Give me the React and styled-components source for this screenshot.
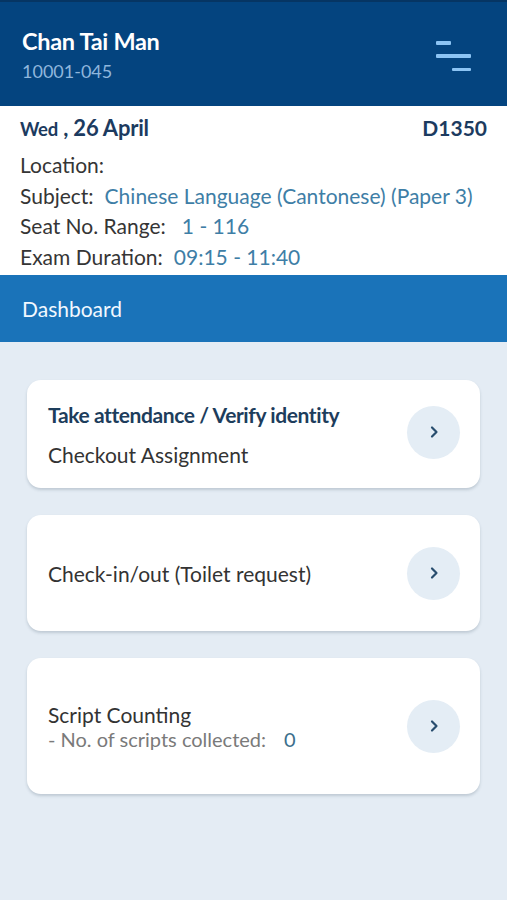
import React from "react";
import styled, { createGlobalStyle } from "styled-components";

const Global = createGlobalStyle`
  html, body { margin: 0; padding: 0; }
  body { font-family: Lato, "Open Sans", sans-serif; background: #e5edf5; }
  * { box-sizing: border-box; }
`;

const Page = styled.div`
  width: 507px;
  min-height: 900px;
  background: #e4ecf4;
  display: flex;
  flex-direction: column;
`;

const Header = styled.header`
  height: 106px;
  background: #04447f;
  border-top: 2px solid #063563;
  display: flex;
  align-items: center;
  justify-content: space-between;
  padding: 0 36px 0 22px;
`;

const UserBlock = styled.div`
  display: flex;
  flex-direction: column;
  gap: 5px;
`;

const UserName = styled.div`
  color: #ffffff;
  font-weight: 700;
  font-size: 23.5px;
  letter-spacing: -0.3px;
`;

const UserId = styled.div`
  color: #8fb6dc;
  font-size: 18px;
`;

const MenuButton = styled.button`
  background: none;
  border: none;
  padding: 0;
  width: 35px;
  height: 30px;
  display: flex;
  flex-direction: column;
  justify-content: space-between;
  align-items: flex-start;
  margin-top: 4px;
`;

const MenuLine = styled.span`
  display: block;
  height: 3.5px;
  border-radius: 1px;
  background: #8cc4f4;
  width: ${(p) => p.$w}px;
  margin-left: ${(p) => p.$ml || 0}px;
`;

const Info = styled.section`
  background: #ffffff;
  padding: 8px 20px 6px 20px;
  height: 169px;
  overflow: hidden;
`;

const DateRow = styled.div`
  display: flex;
  justify-content: space-between;
  align-items: baseline;
  color: #1c3b60;
  font-weight: 700;
  margin-bottom: 9px;
`;

const DateText = styled.div`
  font-size: 22px;
  letter-spacing: -0.2px;
`;

const Day = styled.span`
  font-size: 18.5px;
`;

const Code = styled.div`
  font-size: 21px;
`;

const InfoRow = styled.div`
  display: flex;
  white-space: nowrap;
  font-size: 21px;
  line-height: 30.5px;
  color: #353535;
`;

const Value = styled.span`
  color: #3e7ea6;
  margin-left: ${(p) => p.$gap || 8}px;
`;

const TabBar = styled.div`
  height: 67px;
  background: #1a73b9;
  display: flex;
  align-items: center;
  padding-left: 22px;
  color: #f2f8ff;
  font-size: 21px;
`;

const List = styled.div`
  padding: 38px 27px 40px 27px;
  display: flex;
  flex-direction: column;
  gap: 27px;
`;

const Card = styled.div`
  background: #ffffff;
  border-radius: 14px;
  box-shadow: 0 2px 3px rgba(60, 80, 100, 0.22);
  height: ${(p) => p.$h}px;
  display: flex;
  align-items: center;
  justify-content: space-between;
  padding: 0 20px 0 21px;
`;

const CardText = styled.div`
  display: flex;
  flex-direction: column;
  gap: ${(p) => p.$gap || 0}px;
`;

const CardTitle = styled.div`
  font-size: 21px;
  font-weight: ${(p) => (p.$bold ? 700 : 400)};
  color: ${(p) => (p.$bold ? "#1d3d5c" : "#333333")};
  letter-spacing: ${(p) => (p.$bold ? "-0.4px" : "0")};
`;

const CardSub = styled.div`
  font-size: 20px;
  color: #7a7a7a;
`;

const Count = styled.span`
  color: #3c6f8c;
  margin-left: 18px;
`;

const Chevron = styled.div`
  width: 53px;
  height: 53px;
  border-radius: 50%;
  background: #e4edf5;
  display: flex;
  align-items: center;
  justify-content: center;
  margin-top: ${(p) => p.$mt || 0}px;
`;

const ChevronIcon = () => (
  <svg width="14" height="14" viewBox="0 0 14 14">
    <path d="M5 2.5 L9.5 7 L5 11.5" fill="none" stroke="#284d6e" strokeWidth="2.2" strokeLinecap="round" strokeLinejoin="round" />
  </svg>
);

export default function App() {
  return (
    <>
      <Global />
      <Page>
        <Header>
          <UserBlock>
            <UserName>Chan Tai Man</UserName>
            <UserId>10001-045</UserId>
          </UserBlock>
          <MenuButton aria-label="menu">
            <MenuLine $w={15} />
            <MenuLine $w={35} />
            <MenuLine $w={19} $ml={16} />
          </MenuButton>
        </Header>
        <Info>
          <DateRow>
            <DateText>
              <Day>Wed</Day> , 26 April
            </DateText>
            <Code>D1350</Code>
          </DateRow>
          <InfoRow>Location:</InfoRow>
          <InfoRow>
            Subject:<Value $gap={11}>Chinese Language (Cantonese) (Paper 3)</Value>
          </InfoRow>
          <InfoRow>
            Seat No. Range:<Value $gap={16}>1 - 116</Value>
          </InfoRow>
          <InfoRow>
            Exam Duration:<Value $gap={11}>09:15 - 11:40</Value>
          </InfoRow>
        </Info>
        <TabBar>Dashboard</TabBar>
        <List>
          <Card $h={108}>
            <CardText $gap={15}>
              <CardTitle $bold>Take attendance / Verify identity</CardTitle>
              <CardTitle>Checkout Assignment</CardTitle>
            </CardText>
            <Chevron $mt={-4}>
              <ChevronIcon />
            </Chevron>
          </Card>
          <Card $h={116}>
            <CardText>
              <CardTitle>Check-in/out (Toilet request)</CardTitle>
            </CardText>
            <Chevron>
              <ChevronIcon />
            </Chevron>
          </Card>
          <Card $h={136}>
            <CardText $gap={0}>
              <CardTitle>Script Counting</CardTitle>
              <CardSub>
                - No. of scripts collected:<Count>0</Count>
              </CardSub>
            </CardText>
            <Chevron>
              <ChevronIcon />
            </Chevron>
          </Card>
        </List>
      </Page>
    </>
  );
}
